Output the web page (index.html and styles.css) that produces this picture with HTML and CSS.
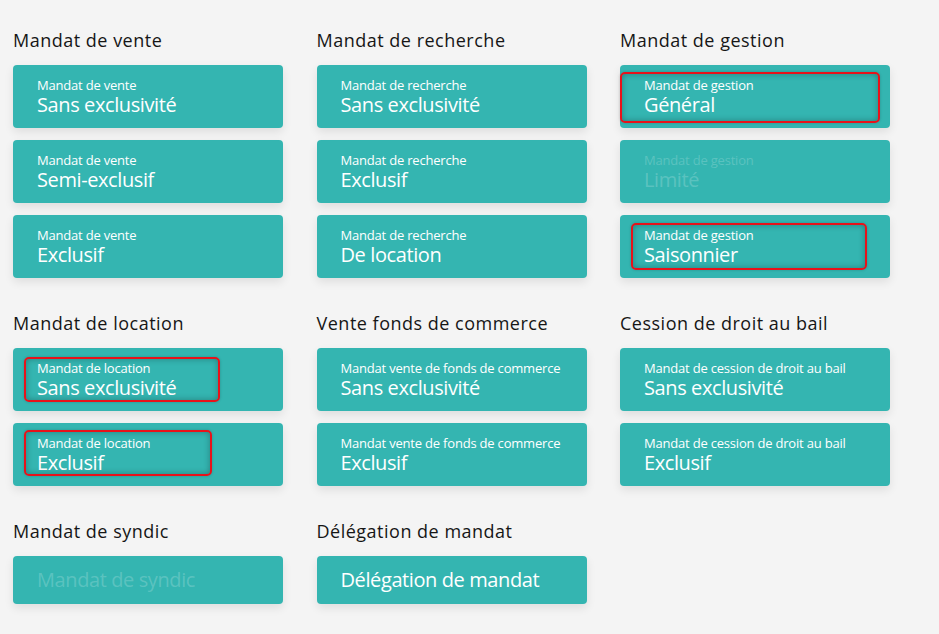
FILE: index.html
```html
<!DOCTYPE html>
<html lang="fr">
<head>
<meta charset="utf-8">
<title>Mandats</title>
<link rel="stylesheet" href="styles.css">
</head>
<body>
<main class="page">
  <section class="group">
    <h2 class="group-title">Mandat de vente</h2>
    <div class="cards">
      <div class="card"><span class="card-sub">Mandat de vente</span><span class="card-main">Sans exclusivité</span></div>
      <div class="card"><span class="card-sub">Mandat de vente</span><span class="card-main">Semi-exclusif</span></div>
      <div class="card"><span class="card-sub">Mandat de vente</span><span class="card-main">Exclusif</span></div>
    </div>
  </section>
  <section class="group">
    <h2 class="group-title">Mandat de recherche</h2>
    <div class="cards">
      <div class="card"><span class="card-sub">Mandat de recherche</span><span class="card-main">Sans exclusivité</span></div>
      <div class="card"><span class="card-sub">Mandat de recherche</span><span class="card-main">Exclusif</span></div>
      <div class="card"><span class="card-sub">Mandat de recherche</span><span class="card-main">De location</span></div>
    </div>
  </section>
  <section class="group">
    <h2 class="group-title">Mandat de gestion</h2>
    <div class="cards">
      <div class="card"><span class="card-sub">Mandat de gestion</span><span class="card-main">Général</span><span class="mark mark-general"></span></div>
      <div class="card disabled"><span class="card-sub">Mandat de gestion</span><span class="card-main">Limité</span></div>
      <div class="card"><span class="card-sub">Mandat de gestion</span><span class="card-main">Saisonnier</span><span class="mark mark-saison"></span></div>
    </div>
  </section>

  <section class="group">
    <h2 class="group-title">Mandat de location</h2>
    <div class="cards">
      <div class="card"><span class="card-sub">Mandat de location</span><span class="card-main">Sans exclusivité</span><span class="mark mark-loc1"></span></div>
      <div class="card"><span class="card-sub">Mandat de location</span><span class="card-main">Exclusif</span><span class="mark mark-loc2"></span></div>
    </div>
  </section>
  <section class="group">
    <h2 class="group-title">Vente fonds de commerce</h2>
    <div class="cards">
      <div class="card"><span class="card-sub">Mandat vente de fonds de commerce</span><span class="card-main">Sans exclusivité</span></div>
      <div class="card"><span class="card-sub">Mandat vente de fonds de commerce</span><span class="card-main">Exclusif</span></div>
    </div>
  </section>
  <section class="group">
    <h2 class="group-title">Cession de droit au bail</h2>
    <div class="cards">
      <div class="card"><span class="card-sub">Mandat de cession de droit au bail</span><span class="card-main">Sans exclusivité</span></div>
      <div class="card"><span class="card-sub">Mandat de cession de droit au bail</span><span class="card-main">Exclusif</span></div>
    </div>
  </section>

  <section class="group">
    <h2 class="group-title">Mandat de syndic</h2>
    <div class="cards">
      <div class="card single disabled"><span class="card-main">Mandat de syndic</span></div>
    </div>
  </section>
  <section class="group">
    <h2 class="group-title">Délégation de mandat</h2>
    <div class="cards">
      <div class="card single"><span class="card-main">Délégation de mandat</span></div>
    </div>
  </section>
</main>
</body>
</html>
```

FILE: styles.css
```css
* { box-sizing: border-box; }
html, body {
  margin: 0;
  background: #f4f4f4;
}
body {
  font-family: "Open Sans", "Noto Sans", sans-serif;
  color: #161616;
  width: 939px;
  height: 634px;
  overflow: hidden;
}
.page {
  display: grid;
  grid-template-columns: 270px 270px 270px;
  column-gap: 33.5px;
  row-gap: 33px;
  padding: 28px 0 0 13px;
  align-items: start;
}
.group-title {
  margin: 0 0 13px;
  font-size: 18px;
  line-height: 24px;
  font-weight: 400;
  letter-spacing: 0.5px;
}
.cards {
  display: flex;
  flex-direction: column;
  gap: 12px;
}
.card {
  position: relative;
  display: flex;
  flex-direction: column;
  height: 63px;
  padding: 12px 24px;
  background: #34b5b1;
  border-radius: 4px;
  box-shadow: 0 4px 10px rgba(0, 0, 0, 0.09);
  color: #fff;
}
.card.single {
  height: 48px;
}
.card-sub {
  font-size: 13px;
  line-height: 16px;
  letter-spacing: -0.2px;
}
.card-main {
  font-size: 20px;
  line-height: 23px;
  letter-spacing: -0.4px;
}
.card.single .card-main {
  line-height: 24px;
}
.card.disabled {
  color: rgba(255, 255, 255, 0.2);
}
.mark {
  position: absolute;
  border: 2px solid #e8121a;
  border-radius: 5px;
  box-shadow: inset 0 0 6px rgba(0, 0, 0, 0.3), 0 0 3px rgba(0, 0, 0, 0.2);
}
.mark-general { left: 0; top: 7px; width: 260px; height: 51px; }
.mark-saison { left: 11px; top: 8px; width: 236px; height: 47px; }
.mark-loc1 { left: 11px; top: 9px; width: 196px; height: 45px; }
.mark-loc2 { left: 11px; top: 7px; width: 188px; height: 46px; }
```
